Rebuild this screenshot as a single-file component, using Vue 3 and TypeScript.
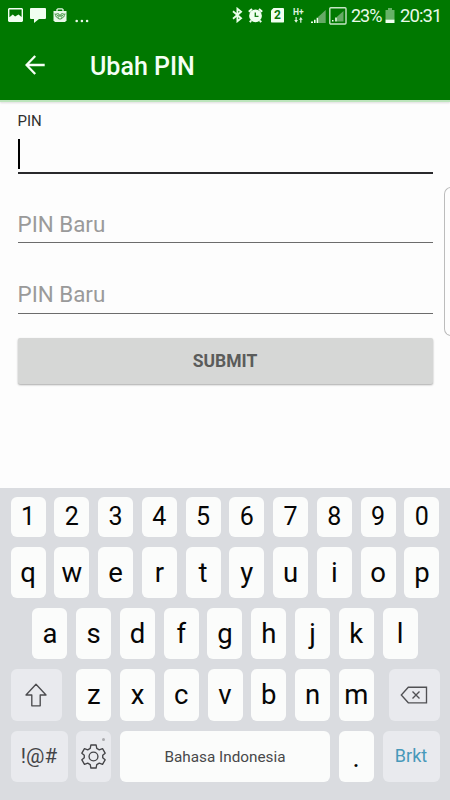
<script setup lang="ts">
import { ref } from 'vue'

const digits: string[] = [...'1234567890']
const topRow: string[] = [...'qwertyuiop']
const homeRow: string[] = [...'asdfghjkl']
const bottomRow: string[] = [...'zxcvbnm']
const newPinFields = ref([
  { id: 'new', label: 'PIN Baru' },
  { id: 'confirm', label: 'PIN Baru' },
])
</script>

<template>
  <div class="screen">
    <header class="header">
      <div class="status">
        <div class="notices">
          <svg width="15" height="15" viewBox="0 0 15 15">
            <path fill="#f0fff0" fill-rule="evenodd" d="M1 0h13l1 1v12l-1 1H1l-1-1V1zM1.4 1.4v7.8L4.8 6.4l2.3 2 3.4-1.8 3.1 2.3V1.4z" />
          </svg>
          <svg width="16" height="15" viewBox="0 0 16 15">
            <path fill="#f0fff0" d="M1 0h14q1 0 1 1v9q0 1-1 1H9l-5 4v-4H1q-1 0-1-1V1q0-1 1-1z" />
          </svg>
          <svg width="14" height="15" viewBox="0 0 14 15">
            <path fill="#e9f8e9" d="M.5 3h13v9.5L12 14H2L.5 12.5z" />
            <path fill="none" stroke="#e9f8e9" stroke-width="1.3" d="M4 3.5V1.6L5 .8h4l1 .8v1.9" />
            <g fill="none" stroke="#358b35" stroke-width=".9">
              <circle cx="4.6" cy="7.5" r="1.9" /><circle cx="9.4" cy="7.5" r="1.9" />
              <path d="M4.6 10.3q2.4 1.6 4.8 0M1.5 6l1.5.3M12.5 6l-1.5.3" />
            </g>
            <circle cx="4.9" cy="7.5" r=".7" fill="#267c26" /><circle cx="9.1" cy="7.5" r=".7" fill="#267c26" />
          </svg>
          <svg class="more" width="14" height="4" viewBox="0 0 14 4" fill="#e9f8e9">
            <circle cx="1.7" cy="2" r="1.3" /><circle cx="6.9" cy="2" r="1.3" /><circle cx="12.1" cy="2" r="1.3" />
          </svg>
        </div>
        <div class="system">
          <svg class="bluetooth" width="11" height="16" viewBox="0 0 11 16" fill="none" stroke="#eaffea" stroke-width="1.8">
            <path d="m1 4.3 8.1 7L5.4 14.3V1.7l3.7 3L1 11.7" />
          </svg>
          <svg class="alarm" width="15" height="15" viewBox="0 0 15 15">
            <circle cx="7.5" cy="7.8" r="6.4" fill="#f0fff0" />
            <path d="M.8 3.8 4 1M14.2 3.8 11 1M3 12.5l-1 1.7M12 12.5l1 1.7" stroke="#f0fff0" stroke-width="2" />
            <path d="M7.3 4.6v3.8h3.2" fill="none" stroke="#168016" stroke-width="1.4" />
          </svg>
          <div class="sim">2</div>
          <div class="network">
            <span>H+</span>
            <svg width="9" height="6" viewBox="0 0 9 6" fill="#dff4df">
              <path d="M1.5 0h1.2v3H4L2.1 5.7.2 3h1.3zM6.2 5.7h1.2v-3h1.3L6.8 0 4.9 2.7h1.3z" />
            </svg>
          </div>
          <svg class="signal" width="15" height="15" viewBox="0 0 15 15">
            <path fill="#66aa66" d="M7.2 14V7.8L9 6.3V14zM9 14V6.3L14.7 1v13z" />
            <path fill="#f0fff0" d="M0 14v-1.5h2V14zM3 14v-3.2h1.6V14zM5.6 14V8.7h1.6V14z" />
          </svg>
          <svg class="signal-box" width="18" height="18" viewBox="0 0 18 18">
            <rect x=".8" y=".8" width="16.2" height="16.2" rx="1" fill="none" stroke="#c5e5c5" stroke-width="1.4" />
            <path fill="#66aa66" d="M8 14.5V9.8L14.5 4v10.5z" />
            <path fill="#f0fff0" d="M3 14.5v-1.6h1.5v1.6zM6.2 14.5v-4h1.6v4z" />
          </svg>
          <span class="percent">23%</span>
          <svg class="battery" width="10" height="15" viewBox="0 0 10 15">
            <path fill="#67b267" d="M3 0h4v2h2.5v9.5H.5V2H3z" /><path fill="#f0fff0" d="M.5 11.5h9V15h-9z" />
          </svg>
          <span class="clock">20:31</span>
        </div>
      </div>
      <div class="toolbar">
        <svg width="20" height="20" viewBox="0 0 20 20" fill="none" stroke="#f4fff4" stroke-width="2.3">
          <path d="M19.7 10H1.8M10.2 1 1.5 10l8.7 9" />
        </svg>
        <h1>Ubah PIN</h1>
      </div>
    </header>

    <main class="form">
      <label class="pin-label">PIN</label>
      <div class="field active"><span class="caret"></span></div>
      <div v-for="field in newPinFields" :key="field.id" class="field">{{ field.label }}</div>
      <button class="submit">SUBMIT</button>
      <div class="edge-handle"></div>
    </main>

    <section class="keyboard">
      <div class="row digits"><div v-for="k in digits" :key="k" class="key">{{ k }}</div></div>
      <div class="row"><div v-for="k in topRow" :key="k" class="key">{{ k }}</div></div>
      <div class="row home"><div v-for="k in homeRow" :key="k" class="key">{{ k }}</div></div>
      <div class="row">
        <div class="key util shift">
          <svg width="24" height="24" viewBox="0 0 24 24" fill="none" stroke="#4b4b4e" stroke-width="1.35" stroke-linejoin="round">
            <path d="M12 1.3 22 12h-5.8v10.8H7.8V12H2z" />
          </svg>
        </div>
        <div v-for="k in bottomRow" :key="k" class="key">{{ k }}</div>
        <div class="key util delete">
          <svg width="28" height="18" viewBox="0 0 28 18" fill="none" stroke="#505053" stroke-width="1.35">
            <path d="M8.3 1.2h18.2v15.6H8.3L1.3 9zM12.5 5.5l7 7M19.5 5.5l-7 7" />
          </svg>
        </div>
      </div>
      <div class="row">
        <div class="key util symbols">!@#</div>
        <div class="key util settings">
          <svg width="25" height="25" viewBox="0 0 26 26" fill="none" stroke="#444447" stroke-width="1.4" stroke-linejoin="round">
            <path d="M10.3 1h5.4l.7 3.6 2.6 1.5 3.4-1.2 2.7 4.6-2.5 2.2v2.6l2.5 2.2-2.7 4.6-3.4-1.2-2.6 1.5-.7 3.6h-5.4l-.7-3.6L7 19.9l-3.4 1.2-2.7-4.6 2.5-2.2v-2.6L.9 9.5l2.7-4.6L7 6.1l2.6-1.5z" />
            <circle cx="13" cy="13" r="4.6" />
          </svg>
          <span class="dot"></span>
        </div>
        <div class="key space">Bahasa Indonesia</div>
        <div class="key period">.</div>
        <div class="key util enter">Brkt</div>
      </div>
    </section>
  </div>
</template>

<style>
body {
  background: #fdfdfd;
  overflow: hidden;
}
</style>

<style scoped>
* {
  box-sizing: border-box;
}
.screen {
  width: 450px;
  height: 800px;
  display: flex;
  flex-direction: column;
  overflow: hidden;
  background: #fdfdfd;
  font-family: Roboto, sans-serif;
}
svg {
  display: block;
  flex: none;
}
.header {
  height: 100px;
  flex: none;
  background: #007800;
  color: #f4fff4;
  box-shadow: 0 2px 0 #bce5bc, 0 3px 2px #dddddd;
}
.status {
  height: 32px;
  display: flex;
  justify-content: space-between;
  padding: 0 9px 0 8px;
}
.notices {
  display: flex;
  padding-top: 8px;
}
.notices svg + svg {
  margin-left: 7px;
}
.notices .more {
  margin: 11px 0 0 8px;
}
.system {
  display: flex;
  align-items: center;
}
.bluetooth {
  margin-top: -2px;
}
.alarm {
  margin: -2px 0 0 5px;
}
.sim {
  width: 13px;
  height: 15px;
  margin: -2px 0 0 8px;
  border-radius: 1px;
  background: #f0fff0;
  clip-path: polygon(3px 0, 100% 0, 100% 100%, 0 100%, 0 3px);
  color: #087808;
  font: 700 12px/15px Roboto, sans-serif;
  text-align: center;
}
.network {
  width: 13px;
  margin: -1px 0 0 9px;
  font: 700 8.5px/9px Roboto, sans-serif;
  color: #dff4df;
}
.network svg {
  margin-left: 1px;
}
.signal {
  margin-left: 5px;
}
.signal-box {
  margin: -1px 0 0 3px;
}
.percent,
.clock {
  font-size: 18.5px;
  line-height: 32px;
  color: #e9fae9;
}
.percent {
  width: 30px;
  margin-left: 4px;
  font-size: 18px;
  letter-spacing: -1px;
}
.battery {
  margin: -1px 0 0 4px;
}
.clock {
  width: 41px;
  margin-left: 5px;
  letter-spacing: -0.9px;
}
.toolbar {
  height: 68px;
  display: flex;
  align-items: center;
  padding: 0 0 2px 25px;
}
h1 {
  margin: 0 0 0 45px;
  padding-top: 3px;
  font-size: 25px;
  line-height: 30px;
  font-weight: 500;
}
.form {
  position: relative;
  height: 387.5px;
  flex: none;
  padding: 12px 17.5px 0 17.5px;
}
.pin-label {
  display: block;
  height: 18px;
  font-size: 15px;
  line-height: 18px;
  color: #303030;
}
.field {
  height: 70.5px;
  padding-top: 38px;
  border-bottom: 1px solid #6c6c6c;
  font-size: 22.4px;
  line-height: 26px;
  color: #9a9a9a;
}
.field.active {
  height: 43.5px;
  padding-top: 9px;
  border-bottom: 2.5px solid #29292c;
}
.field.active + .field {
  height: 69.5px;
  padding-top: 37px;
}
.caret {
  display: block;
  width: 2px;
  height: 30px;
  background: #000;
}
.submit {
  display: block;
  width: 100%;
  height: 46px;
  margin-top: 24.5px;
  padding: 0;
  border: 0;
  border-radius: 2px;
  background: #d6d7d6;
  box-shadow: 0 1px 2px #a9a9a9;
  color: #5b5c5b;
  font: 700 17.5px Roboto, sans-serif;
}
.edge-handle {
  position: absolute;
  top: 87px;
  right: -1px;
  width: 7px;
  height: 149px;
  border: 1px solid #bcbcbc;
  border-right: 0;
  border-radius: 8px 0 0 8px;
}
.keyboard {
  height: 312.5px;
  flex: none;
  padding: 9px 10.5px 0;
  display: flex;
  flex-direction: column;
  gap: 10px;
  background: #dadce0;
}
.row {
  height: 51.2px;
  flex: none;
  display: flex;
  justify-content: space-between;
}
.row.digits {
  height: 40.5px;
}
.row.home {
  padding: 0 21.9px;
}
.key {
  width: 35px;
  height: 100%;
  display: flex;
  align-items: center;
  justify-content: center;
  border-radius: 6px;
  background: #fbfcfb;
  color: #060606;
  font-size: 27.5px;
  line-height: 32px;
}
.digits .key {
  padding-top: 1px;
  font-size: 25px;
}
.util {
  background: #e9eaee;
  color: #444447;
}
.shift {
  width: 51px;
  margin-right: 6px;
}
.delete {
  width: 51px;
  margin-left: 6px;
}
.symbols {
  width: 57px;
  font-size: 20.5px;
}
.settings {
  position: relative;
}
.dot {
  position: absolute;
  top: 7px;
  right: 6px;
  width: 3px;
  height: 3px;
  border-radius: 50%;
  background: #aaaaad;
}
.space {
  width: 210px;
  padding-top: 1px;
  font-size: 15.3px;
  color: #48484a;
}
.period {
  padding-top: 3px;
}
.enter {
  width: 57px;
  font-size: 18px;
  color: #4799ba;
}
</style>
